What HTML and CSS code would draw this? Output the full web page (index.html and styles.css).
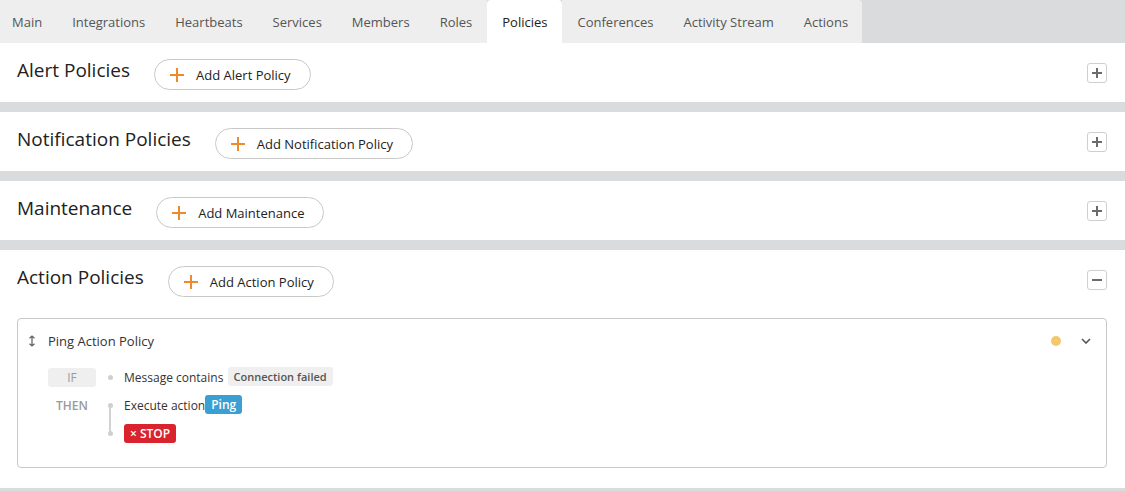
FILE: index.html
```html
<!DOCTYPE html>
<html lang="en">
<head>
<meta charset="utf-8">
<title>Policies</title>
<link rel="stylesheet" href="styles.css">
</head>
<body>
<nav class="tabs">
  <a class="tab">Main</a>
  <a class="tab">Integrations</a>
  <a class="tab">Heartbeats</a>
  <a class="tab">Services</a>
  <a class="tab">Members</a>
  <a class="tab">Roles</a>
  <a class="tab active">Policies</a>
  <a class="tab">Conferences</a>
  <a class="tab">Activity Stream</a>
  <a class="tab">Actions</a>
</nav>

<section class="section">
  <div class="section-head">
    <h2 class="section-title">Alert Policies</h2>
    <button class="add-btn"><svg class="plus" viewBox="0 0 14 14"><path d="M7 0V14M0 7H14"/></svg>Add Alert Policy</button>
    <span class="toggle"><svg viewBox="0 0 10 10"><path d="M5 0V10M0 5H10"/></svg></span>
  </div>
</section>

<section class="section">
  <div class="section-head">
    <h2 class="section-title">Notification Policies</h2>
    <button class="add-btn"><svg class="plus" viewBox="0 0 14 14"><path d="M7 0V14M0 7H14"/></svg>Add Notification Policy</button>
    <span class="toggle"><svg viewBox="0 0 10 10"><path d="M5 0V10M0 5H10"/></svg></span>
  </div>
</section>

<section class="section">
  <div class="section-head">
    <h2 class="section-title">Maintenance</h2>
    <button class="add-btn"><svg class="plus" viewBox="0 0 14 14"><path d="M7 0V14M0 7H14"/></svg>Add Maintenance</button>
    <span class="toggle"><svg viewBox="0 0 10 10"><path d="M5 0V10M0 5H10"/></svg></span>
  </div>
</section>

<section class="section open">
  <div class="section-head">
    <h2 class="section-title">Action Policies</h2>
    <button class="add-btn"><svg class="plus" viewBox="0 0 14 14"><path d="M7 0V14M0 7H14"/></svg>Add Action Policy</button>
    <span class="toggle"><svg viewBox="0 0 10 10"><path d="M0 5H10"/></svg></span>
  </div>

  <div class="card">
    <div class="card-head">
      <svg class="drag" viewBox="0 0 8 12"><path d="M4 1V11M1.5 3.2L4 1L6.5 3.2M1.5 8.8L4 11L6.5 8.8"/></svg>
      <span class="card-title">Ping Action Policy</span>
      <span class="status-dot"></span>
      <svg class="chevron" viewBox="0 0 10 6"><path d="M1 1L5 5L9 1"/></svg>
    </div>

    <div class="rules">
      <div class="rule">
        <span class="label label-if">IF</span>
        <span class="node"><i class="dot"></i></span>
        <span class="rule-text">Message contains <span class="tag tag-gray">Connection failed</span></span>
      </div>
      <div class="rule">
        <span class="label label-then">THEN</span>
        <span class="node node-first"><i class="dot"></i></span>
        <span class="rule-text">Execute action<span class="tag tag-blue">Ping</span></span>
      </div>
      <div class="rule">
        <span class="label"></span>
        <span class="node node-last"><i class="dot"></i></span>
        <span class="rule-text"><span class="tag tag-red">× STOP</span></span>
      </div>
    </div>
  </div>
</section>
</body>
</html>
```

FILE: styles.css
```css
* { box-sizing: border-box; }

html, body {
  margin: 0;
  padding: 0;
}

body {
  background: #dadbdc;
  font-family: "Open Sans", "Noto Sans", sans-serif;
  color: #333;
}

.tabs {
  display: flex;
  height: 43px;
}

.tab {
  display: flex;
  align-items: center;
  padding: 0 15px;
  background: #eeeeee;
  color: #555;
  font-size: 13px;
  white-space: nowrap;
}

.tab:first-child { padding-left: 12px; }
.tab:last-child { border-top-right-radius: 4px; padding-right: 14px; }

.tab.active {
  background: #fff;
  color: #222;
  padding: 0 15px;
  border-radius: 4px 4px 0 0;
}

.section {
  background: #fff;
  margin-bottom: 10px;
  padding: 14px 18px 12px 17px;
}

.section.open {
  padding-bottom: 20px;
}

.section-head {
  display: flex;
  align-items: flex-start;
}

.section-title {
  margin: 0 24px 0 0;
  font-size: 19px;
  line-height: 27px;
  font-weight: 400;
  color: #222;
}

.add-btn {
  margin-top: 2px;
  height: 31px;
  display: flex;
  align-items: center;
  padding: 0 19px 0 15px;
  border: 1px solid #c9c9c9;
  border-radius: 16px;
  background: #fff;
  font-family: inherit;
  font-size: 13px;
  color: #222;
}

.plus {
  width: 14px;
  height: 14px;
  margin-right: 12px;
  stroke: #ee8a2e;
  stroke-width: 2;
  fill: none;
}

.toggle {
  margin-left: auto;
  margin-top: 6px;
  width: 20px;
  height: 20px;
  border: 1px solid #cfcfcf;
  border-radius: 3px;
  display: flex;
  align-items: center;
  justify-content: center;
}

.toggle svg {
  width: 10px;
  height: 10px;
  stroke: #6b6b6b;
  stroke-width: 2;
  fill: none;
}

.card {
  margin-top: 21px;
  border: 1px solid #c8c8c8;
  border-radius: 4px;
  padding: 11px 15px 20px 10px;
}

.card-head {
  display: flex;
  align-items: center;
  height: 22px;
}

.drag {
  width: 8px;
  height: 12px;
  stroke: #666;
  stroke-width: 1.3;
  fill: none;
  margin-right: 12px;
}

.card-title {
  font-size: 13px;
  color: #333;
}

.status-dot {
  margin-left: auto;
  width: 10px;
  height: 10px;
  border-radius: 50%;
  background: #f3c86c;
  margin-right: 20px;
}

.chevron {
  width: 10px;
  height: 6px;
  stroke: #555;
  stroke-width: 1.6;
  fill: none;
}

.rules {
  margin-top: 11px;
  padding-left: 20px;
}

.rule {
  display: flex;
  align-items: center;
  height: 28px;
}

.label {
  width: 48px;
  height: 19px;
  line-height: 19px;
  text-align: center;
  font-size: 12px;
  font-weight: 600;
  color: #9a9a9a;
  border-radius: 3px;
}

.label-if {
  background: #efefef;
  font-weight: 400;
}

.node {
  position: relative;
  width: 28px;
  height: 28px;
  display: flex;
  align-items: center;
  justify-content: center;
}

.node-first::after,
.node-last::after {
  content: "";
  position: absolute;
  left: 13px;
  width: 2px;
  background: #d2d2d2;
  height: 14px;
}

.node-first::after { top: 14px; }
.node-last::after { top: 0; }

.dot {
  position: relative;
  z-index: 1;
  width: 5px;
  height: 5px;
  border-radius: 50%;
  background: #cfcfcf;
}

.rule-text {
  display: flex;
  align-items: center;
  font-size: 12px;
  color: #333;
  white-space: pre;
}

.tag {
  display: inline-block;
  height: 19px;
  line-height: 19px;
  padding: 0 6px;
  border-radius: 3px;
  font-size: 11px;
  font-weight: 600;
  margin-top: -2px;
}

.tag-gray {
  background: #efefef;
  color: #555;
  margin-left: 1px;
}

.tag-blue {
  background: #3a9fd3;
  color: #fff;
  font-size: 12px;
}

.tag-red {
  background: #d9232d;
  color: #fff;
  font-size: 12px;
  padding: 0 6px;
  margin-top: 0;
}
```
